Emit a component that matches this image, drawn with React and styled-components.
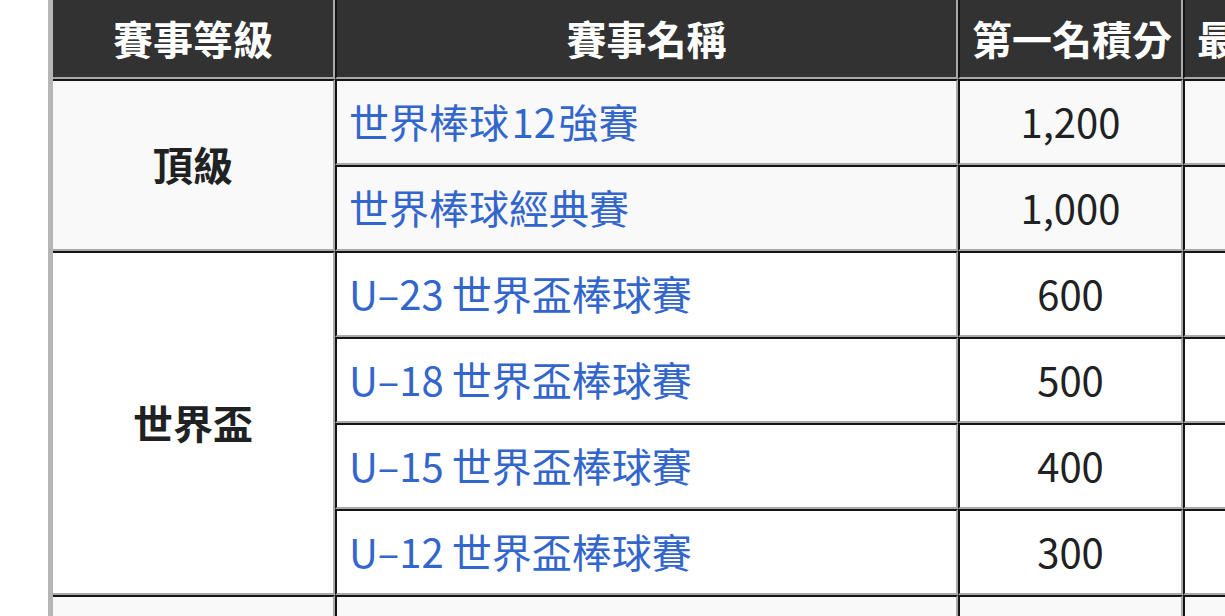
import React from "react";
import styled, { createGlobalStyle } from "styled-components";

const GlobalStyle = createGlobalStyle`
  html, body {
    margin: 0;
    padding: 0;
    background: #ffffff;
    overflow: hidden;
  }
  body {
    font-family: "Noto Sans CJK TC", "Noto Sans", sans-serif;
  }
`;

const Page = styled.div`
  padding-left: 48px;
  width: 1600px;
`;

const Table = styled.table`
  border-collapse: separate;
  border-spacing: 0;
  table-layout: fixed;
  width: 1395px;
  border-left: 5px solid #b6b6b6;
  font-size: 40px;
  line-height: 48px;
  color: #202122;
`;

const HeadCell = styled.th`
  background: #323232;
  color: #ffffff;
  font-weight: 700;
  text-align: center;
  white-space: nowrap;
  padding: 14px 12px 15px;
  border-left: ${(p) => (p.$first ? "0" : "2px solid #141414")};
  border-right: 2px solid #a9a9a9;
  border-bottom: 2px solid #a9a9a9;
`;

const Cell = styled.td`
  background: ${(p) => (p.$shade ? "#f9f9f9" : "#ffffff")};
  text-align: ${(p) => (p.$left ? "left" : "center")};
  font-weight: ${(p) => (p.$bold ? 700 : 400)};
  white-space: nowrap;
  padding: 16px 12px 18px;
  border-top: 2px solid #141414;
  border-left: ${(p) => (p.$first ? "0" : "2px solid #141414")};
  border-right: 2px solid #a9a9a9;
  border-bottom: 2px solid #a9a9a9;
`;

const EventLink = styled.a`
  color: #3366cc;
  text-decoration: none;
`;

const groups = [
  {
    level: "頂級",
    shade: true,
    events: [
      { name: "世界棒球\u200a12\u200a強賽", first: "1,200", last: "60" },
      { name: "世界棒球經典賽", first: "1,000", last: "50" },
    ],
  },
  {
    level: "世界盃",
    shade: false,
    events: [
      { name: "U–23\u2009世界盃棒球賽", first: "600", last: "30" },
      { name: "U–18\u2009世界盃棒球賽", first: "500", last: "25" },
      { name: "U–15\u2009世界盃棒球賽", first: "400", last: "20" },
      { name: "U–12\u2009世界盃棒球賽", first: "300", last: "15" },
    ],
  },
  {
    level: "洲際",
    shade: true,
    events: [{ name: "亞洲棒球錦標賽", first: "200", last: "10" }],
  },
];

export default function App() {
  return (
    <>
      <GlobalStyle />
      <Page>
        <Table>
          <colgroup>
            <col style={{ width: 282 }} />
            <col style={{ width: 623 }} />
            <col style={{ width: 225 }} />
            <col style={{ width: 265 }} />
          </colgroup>
          <thead>
            <tr>
              <HeadCell $first>賽事等級</HeadCell>
              <HeadCell>賽事名稱</HeadCell>
              <HeadCell>第一名積分</HeadCell>
              <HeadCell>最低名次積分</HeadCell>
            </tr>
          </thead>
          <tbody>
            {groups.map((g) =>
              g.events.map((ev, i) => (
                <tr key={ev.name}>
                  {i === 0 && (
                    <Cell $first $bold $shade={g.shade} rowSpan={g.events.length}>
                      {g.level}
                    </Cell>
                  )}
                  <Cell $left $shade={g.shade}>
                    <EventLink href="#">{ev.name}</EventLink>
                  </Cell>
                  <Cell $shade={g.shade}>{ev.first}</Cell>
                  <Cell $shade={g.shade}>{ev.last}</Cell>
                </tr>
              ))
            )}
          </tbody>
        </Table>
      </Page>
    </>
  );
}
